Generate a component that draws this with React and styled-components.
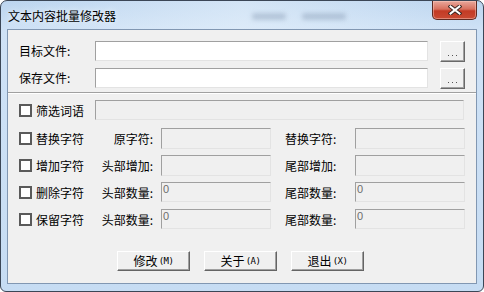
import React from "react";
import styled, { createGlobalStyle } from "styled-components";

const GlobalStyle = createGlobalStyle`
  html, body {
    margin: 0;
    padding: 0;
    background: #ffffff;
  }
  body {
    font-family: "Noto Sans CJK SC", "Noto Sans", sans-serif;
    font-size: 12px;
    color: #000;
  }
`;

const Window = styled.div`
  width: 484px;
  height: 292px;
  box-sizing: border-box;
  border: 1px solid #3b4656;
  border-radius: 7px 7px 6px 6px;
  background: linear-gradient(to bottom, #bcd5ef 0px, #cfe2f6 30px, #c6dcf3 100%);
  padding: 0 6px 7px 6px;
  display: flex;
  flex-direction: column;
  overflow: hidden;
`;

const TitleBar = styled.div`
  height: 28px;
  display: flex;
  align-items: center;
  padding-left: 1px;
  background: linear-gradient(to right, rgba(255, 255, 255, 0) 0%, rgba(235, 244, 252, 0.5) 50%, rgba(255, 255, 255, 0) 100%);
`;

const Title = styled.span`
  font-size: 12px;
  line-height: 14px;
  margin-top: 1px;
  color: #000;
  text-shadow: 0 0 6px rgba(255, 255, 255, 0.9);
`;

const Smudge = styled.span`
  margin-left: 136px;
  margin-top: 2px;
  display: flex;
  gap: 16px;
  filter: blur(2px);
`;

const SmudgeBar = styled.span`
  display: block;
  width: ${(p) => p.$w}px;
  height: 7px;
  border-radius: 3px;
  background: rgba(120, 140, 165, 0.35);
`;

const CloseButton = styled.div`
  margin-left: auto;
  align-self: flex-start;
  width: 45px;
  height: 19px;
  box-sizing: border-box;
  border: 1px solid #5e2a22;
  border-top: none;
  border-radius: 0 0 5px 5px;
  background: linear-gradient(to bottom, #e9a89c 0%, #d8705e 45%, #c33b25 55%, #c94a33 100%);
  box-shadow: inset 0 0 0 1px rgba(255, 210, 200, 0.45);
  display: flex;
  align-items: center;
  justify-content: center;
`;

const Client = styled.div`
  flex: 1;
  border: 1px solid #8197b2;
  background: #f0f0f0;
  display: flex;
  flex-direction: column;
`;

const FileSection = styled.div`
  padding: 11px 10px 0 11px;
  display: flex;
  flex-direction: column;
  gap: 7px;
`;

const Row = styled.div`
  display: flex;
  align-items: center;
  height: 20px;
`;

const FieldLabel = styled.span`
  width: 76px;
  flex: none;
  line-height: 20px;
  white-space: nowrap;
`;

const TextBox = styled.div`
  box-sizing: border-box;
  width: ${(p) => p.$w}px;
  height: ${(p) => p.$h || 20}px;
  flex: none;
  border-top: 1px solid #a0a0a0;
  border-left: 1px solid #a0a0a0;
  border-right: 1px solid #e3e3e3;
  border-bottom: 1px solid #e3e3e3;
  background: ${(p) => (p.$disabled ? "#f0f0f0" : "#ffffff")};
  color: #6d6d6d;
  font-family: "Liberation Sans", Arial, sans-serif;
  font-size: 11px;
  line-height: 11px;
  padding: 1px 0 0 1px;
`;

const BrowseButton = styled.div`
  margin-left: 12px;
  box-sizing: border-box;
  width: 25px;
  height: 21px;
  flex: none;
  border-top: 1px solid #ffffff;
  border-left: 1px solid #ffffff;
  border-right: 1px solid #696969;
  border-bottom: 1px solid #696969;
  box-shadow: inset -1px -1px 0 #a0a0a0;
  background: #f0f0f0;
  display: flex;
  align-items: flex-end;
  justify-content: center;
  padding-bottom: 5px;
  gap: 3px;
`;

const Dot = styled.span`
  width: 1px;
  height: 1px;
  background: #555;
`;

const Separator = styled.div`
  margin-top: 4px;
  border-top: 1px solid #a0a0a0;
  border-bottom: 1px solid #ffffff;
`;

const FilterRow = styled(Row)`
  margin-top: 6px;
  padding-left: 11px;
`;

const OptionGrid = styled.div`
  margin-top: 8px;
  padding-left: 11px;
  display: grid;
  grid-template-columns: 76px 66px 110px 84px 110px;
  grid-auto-rows: 20px;
  row-gap: 7px;
  align-items: center;
`;

const CheckCell = styled.label`
  display: flex;
  align-items: center;
  gap: 4px;
  white-space: nowrap;
  width: 76px;
  flex: none;
`;

const Box = styled.span`
  width: 13px;
  height: 13px;
  box-sizing: border-box;
  border: 2px solid #5a5a5a;
  background: #ffffff;
  flex: none;
`;

const SubLabel = styled.span`
  white-space: nowrap;
  text-align: ${(p) => (p.$right ? "right" : "left")};
  padding-right: ${(p) => (p.$right ? "8px" : "0")};
  padding-left: ${(p) => (p.$right ? "0" : "14px")};
`;

const ButtonRow = styled.div`
  margin-top: 22px;
  display: flex;
  justify-content: center;
  gap: 14px;
  padding-right: 3px;
`;

const DialogButton = styled.div`
  box-sizing: border-box;
  width: 73px;
  height: 20px;
  border-top: 1px solid #ffffff;
  border-left: 1px solid #ffffff;
  border-right: 1px solid #646464;
  border-bottom: 1px solid #646464;
  box-shadow: inset -1px -1px 0 #a0a0a0;
  background: #f0f0f0;
  display: flex;
  align-items: center;
  justify-content: center;
  font-size: 12px;
  line-height: 14px;
`;

const Mnemonic = styled.span`
  font-family: "DejaVu Sans Mono", monospace;
  font-size: 9px;
  letter-spacing: -0.5px;
  margin-left: 1px;
`;

function CloseIcon() {
  return (
    <svg width="14" height="10" viewBox="0 0 14 10">
      <path d="M2.5 1.5 L11.5 8.5 M11.5 1.5 L2.5 8.5" stroke="#3a2622" strokeWidth="4" strokeLinecap="square" />
      <path d="M2.5 1.5 L11.5 8.5 M11.5 1.5 L2.5 8.5" stroke="#ffffff" strokeWidth="2" strokeLinecap="square" />
    </svg>
  );
}

function Check({ children }) {
  return (
    <CheckCell>
      <Box />
      <span>{children}</span>
    </CheckCell>
  );
}

const options = [
  { name: "替换字符", left: "原字符:", right: "替换字符:", value: "" },
  { name: "增加字符", left: "头部增加:", right: "尾部增加:", value: "" },
  { name: "删除字符", left: "头部数量:", right: "尾部数量:", value: "0" },
  { name: "保留字符", left: "头部数量:", right: "尾部数量:", value: "0" },
];

export default function App() {
  return (
    <>
      <GlobalStyle />
      <Window>
        <TitleBar>
          <Title>文本内容批量修改器</Title>
          <Smudge>
            <SmudgeBar $w={34} />
            <SmudgeBar $w={44} />
          </Smudge>
          <CloseButton>
            <CloseIcon />
          </CloseButton>
        </TitleBar>
        <Client>
          <FileSection>
            <Row>
              <FieldLabel>目标文件:</FieldLabel>
              <TextBox $w={333} />
              <BrowseButton>
                <Dot />
                <Dot />
                <Dot />
              </BrowseButton>
            </Row>
            <Row>
              <FieldLabel>保存文件:</FieldLabel>
              <TextBox $w={333} />
              <BrowseButton>
                <Dot />
                <Dot />
                <Dot />
              </BrowseButton>
            </Row>
          </FileSection>
          <Separator />
          <FilterRow>
            <Check>筛选词语</Check>
            <TextBox $w={369} $disabled />
          </FilterRow>
          <OptionGrid>
            {options.map((o) => (
              <React.Fragment key={o.name + o.left}>
                <Check>{o.name}</Check>
                <SubLabel $right>{o.left}</SubLabel>
                <TextBox $w={110} $h={o.value ? 20 : 21} $disabled>
                  {o.value}
                </TextBox>
                <SubLabel>{o.right}</SubLabel>
                <TextBox $w={110} $h={o.value ? 20 : 21} $disabled>
                  {o.value}
                </TextBox>
              </React.Fragment>
            ))}
          </OptionGrid>
          <ButtonRow>
            <DialogButton>
              修改<Mnemonic>(M)</Mnemonic>
            </DialogButton>
            <DialogButton>
              关于<Mnemonic>(A)</Mnemonic>
            </DialogButton>
            <DialogButton>
              退出<Mnemonic>(X)</Mnemonic>
            </DialogButton>
          </ButtonRow>
        </Client>
      </Window>
    </>
  );
}
